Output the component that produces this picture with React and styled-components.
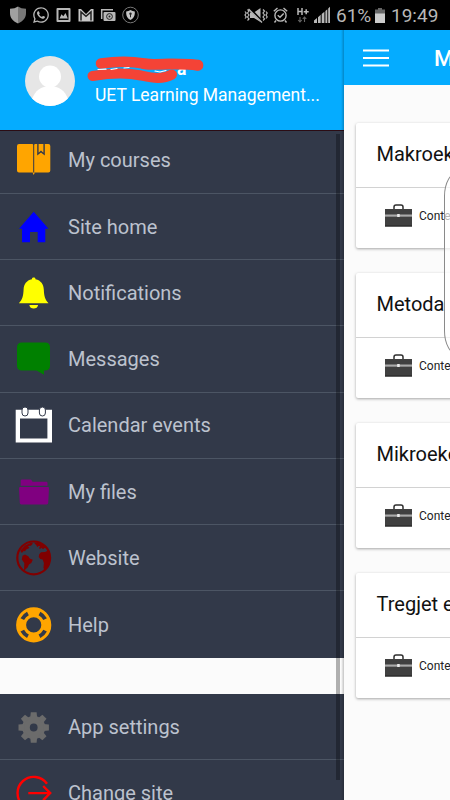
import React from 'react'
import styled, { createGlobalStyle } from 'styled-components'
import { FaWhatsapp } from 'react-icons/fa'

const GlobalStyle = createGlobalStyle`
	* {
		box-sizing: border-box;
	}
	body {
		margin: 0;
		overflow: hidden;
		background: #fbfbfb;
		font-family: Roboto, "Liberation Sans", sans-serif;
	}
	svg {
		display: block;
		flex: none;
		overflow: visible;
	}
`

const Screen = styled.div`
	width: 450px;
	height: 800px;
	display: flex;
	flex-direction: column;
	overflow: hidden;
`

const StatusBar = styled.div`
	height: 30px;
	flex: none;
	display: flex;
	justify-content: space-between;
	background: #000;
	color: #b8b8b8;
`

const StatusGroup = styled.div`
	display: flex;
	align-items: center;
	gap: ${props => props.$gap}px;
	padding: 0 ${props => props.$right || 0}px 0 ${props => props.$left || 0}px;
`

const StatusText = styled.span`
	width: ${props => props.$width}px;
	padding-top: 2px;
	font-size: 19px;
	line-height: 28px;
	white-space: nowrap;
`

const Body = styled.div`
	flex: 1;
	min-height: 0;
	display: flex;
`

const Drawer = styled.div`
	position: relative;
	width: 344px;
	flex: none;
	display: flex;
	flex-direction: column;
	overflow: hidden;
`

const Profile = styled.div`
	position: relative;
	z-index: 1;
	height: 101px;
	flex: none;
	display: flex;
	align-items: center;
	gap: 20px;
	padding: 2px 0 0 25px;
	background: #05acff;
	border-bottom: 1px solid #2b0c14;
`

const ProfileText = styled.div`
	position: relative;
	color: #fff;
	font-size: 17.5px;
	line-height: 26px;
	white-space: nowrap;
	padding-top: 1px;
`

const UserName = styled.div`
	height: 26px;
	padding-left: 82px;
	font-weight: bold;
`

const Scribble = styled.svg`
	position: absolute;
	left: -9px;
	top: 0;
`

const MenuGroup = styled.div`
	flex: none;
	margin-top: ${props => props.$offset}px;
	background: #323949;
`

const MenuRow = styled.div`
	height: 66.25px;
	display: flex;
	align-items: center;
	gap: 16px;
	padding-left: 16px;
	border-bottom: ${props => props.$last ? 'none' : '1px solid #4c5564'};
	color: #bcc2ce;
	font-size: 20px;
`

const Scrollbar = styled.div`
	position: absolute;
	z-index: 2;
	top: 104px;
	left: 336px;
	width: 4px;
	height: 646px;
	background: rgba(0, 0, 0, 0.3);
`

const EdgeShadow = styled.div`
	position: absolute;
	z-index: 2;
	top: 0;
	right: 0;
	width: 3px;
	height: 770px;
	background: linear-gradient(to right, rgba(0, 0, 0, 0), rgba(0, 0, 0, 0.22));
`

const Content = styled.div`
	position: relative;
	flex: 1;
	min-width: 0;
	overflow: hidden;
	background: #fbfbfb;
`

const Toolbar = styled.div`
	height: 55px;
	display: flex;
	align-items: center;
	gap: 45px;
	padding-left: 19px;
	background: #05acff;
	color: #fff;
	font-size: 22.5px;
	font-weight: 500;
	white-space: nowrap;
`

const Cards = styled.div`
	display: flex;
	flex-direction: column;
	gap: 25px;
	padding: 37.5px 0 0 12px;
`

const Card = styled.div`
	width: 320px;
	height: 125px;
	background: #fff;
	border-radius: 2px;
	box-shadow: 0 1px 3px rgba(0, 0, 0, 0.35);
`

const CardTitle = styled.div`
	height: 65px;
	padding-left: 20.5px;
	border-bottom: 1px solid #d2d2d2;
	color: #111;
	font-size: 20px;
	line-height: 62px;
`

const CardLink = styled.div`
	height: 56px;
	display: flex;
	align-items: center;
	gap: 7px;
	padding-left: 29px;
	color: #222;
	font-size: 12px;
`

const EdgePanel = styled.div`
	position: absolute;
	top: 142px;
	left: 100px;
	width: 40px;
	height: 183px;
	border: 1px solid #8a8a8a;
	border-radius: 14px / 24px;
	background: rgba(255, 255, 255, 0.68);
`

const BookIcon = () => (
	<svg width="36" height="36" viewBox="0 0 36 36">
		<path fill="orange" d="M3 2h13.2q1 0 1 1v27.4H3q-2 0-2-2V4q0-2 2-2zM18.2 3q0-1 1-1h2v11.6l3.8-3.2 3.8 3.2V2h3.5q2 0 2 2v24.4q0 2-2 2H18.2z" />
		<path fill="orange" d="M22.6 2h4.8v8.8L25 8.6l-2.4 2.2zM16.5 30.4h2.4l-1.2 2.6z" />
	</svg>
)

const HomeIcon = () => (
	<svg width="36" height="36" viewBox="0 0 36 36">
		<path fill="#00f" d="M17.7 2.7 32.5 19.8h-3.2v13.4h-7.6V23H14v10.2H6V19.8H3z" />
	</svg>
)

const BellIcon = () => (
	<svg width="36" height="36" viewBox="0 0 36 36">
		<path fill="#ff0" d="M17.7 2.6c1.2 0 1.8.7 1.8 1.7 5.5 1.2 8 5 8.3 10.2.3 6.6 1.2 10 4.7 13.7H2.9c3.5-3.7 4.4-7.1 4.7-13.7.3-5.2 2.8-9 8.300-10.200 0-1 .6-1.700 1.800-1.700zM13.300 30h8.800c-.4 2.400-2 3.600-4.400 3.600s-4-1.200-4.400-3.600z" />
	</svg>
)

const MessageIcon = () => (
	<svg width="36" height="36" viewBox="0 0 36 36">
		<path fill="green" d="M6 1.500h23q5 0 5 5v18q0 5-5 5h-1v4.300l-7.400-4.300H6q-5 0-5-5v-18q0-5 5-5z" />
	</svg>
)

const CalendarIcon = () => (
	<svg width="36" height="36" viewBox="0 0 36 36">
		<path fill="#fff" fillRule="evenodd" d="M-.3 2.700H36v32.700H-.3zM4 11.400v20h27.400v-20z" />
		<rect x="6" y="0" width="6" height="9" rx="3" fill="#fff" stroke="#323949" strokeWidth="1" />
		<rect x="23.400" y="0" width="6" height="9" rx="3" fill="#fff" stroke="#323949" strokeWidth="1" />
	</svg>
)

const FolderIcon = () => (
	<svg width="36" height="36" viewBox="0 0 36 36">
		<path fill="purple" d="M4.700 11.700V6.800q0-1.400 1.400-1.400h8.200q1 0 1.500 1l.6 1.300h13.900q1.200 0 1.200 1.200v2.800zM3 14.300q0-1.200 1.200-1.200h27.700q1.200 0 1.100 1.200l-.8 14.700q-.1 1.400-1.500 1.400H5.300q-1.400 0-1.500-1.400z" />
	</svg>
)

const EarthIcon = () => (
	<svg width="36" height="36" viewBox="0 0 36 36">
		<circle cx="17.700" cy="17.900" r="16.400" fill="none" stroke="maroon" strokeWidth="2.200" />
		<path fill="maroon" d="M6.500 15.800 9 14.500l3.300 1.700 1.500 2.300 3 1.200-1.500 3.200-2.300 1.500-1.600 3.300-2 1.500-.4 2-1-.7.3-7.500-2.500-3.500z" />
		<path fill="maroon" d="M23.200 14.200 25 12.300l4-.2 3-1.600 2 7-1.300 7-4 5.200-1.300-1.700.5-5-1.300-3.500-2.300-.5-1.600-2z" />
		<path fill="maroon" d="M4.500 10.500 9 5.500l6-2.700 2 .7-2 2.300-3 .2 1.500 2-3 1.300-1.500 2-1.300-.3-1.600 1.800-1.200-.5zM18 2.800l4-.3 5 2.300 3.300 3.500-1.800-.3-1.500 1.300-1.700-1.500-1.300 1.500-1-1.300 1.300-1.800-2-.3-1 1.300-.8-1.800z" />
	</svg>
)

const HelpIcon = () => (
	<svg width="36" height="36" viewBox="0 0 36 36">
		<circle cx="17.700" cy="17.900" r="12.600" fill="none" stroke="orange" strokeWidth="10" />
		<circle
			cx="17.700" cy="17.900" r="12.800" pathLength="360" fill="none" stroke="#323949"
			strokeWidth="4" strokeDasharray="36 54" strokeDashoffset="-27"
		/>
	</svg>
)

const GearIcon = () => (
	<svg width="36" height="36" viewBox="0 0 36 36">
		<circle cx="17.700" cy="18.500" r="7.700" fill="none" stroke="#6b6b6b" strokeWidth="7.600" />
		{[0, 45, 90, 135, 180, 225, 270, 315].map(angle => (
			<path key={angle} fill="#6b6b6b" d="M14.200 9l.6-5.700h5.800l.6 5.700z" transform={`rotate(${angle} 17.700 18.500)`} />
		))}
	</svg>
)

const ExitIcon = () => (
	<svg width="36" height="36" viewBox="0 0 36 36" fill="none" stroke="#f00" strokeWidth="2.400">
		<path d="M31 8.800a16.200 16.200 0 1 0 0 18.600M12.300 18.100H34M27.200 11l7 7.100-7 7.100" />
	</svg>
)

const BriefcaseIcon = () => (
	<svg width="27" height="23" viewBox="0 0 27 23">
		<path d="M9 5V3q0-2 2-2h5q2 0 2 2v2" fill="none" stroke="#2f2f2f" strokeWidth="1.500" />
		<path fill="#404040" d="M0 5h27v6H0zM0 12.300h27V22.500H0z" />
		<path fill="#aaa" d="M0 10.500h27v1.900H0z" />
		<path fill="#eee" d="M12.200 10h2.500v3h-2.500z" />
		<path fill="#222" d="M0 21.500h27v1H0z" />
	</svg>
)

const StatusLeft = () => (
	<StatusGroup $gap={6} $left={10}>
		<svg width="16" height="18" viewBox="0 0 16 18">
			<path fill="#a0a0a0" d="M8 .5v17C2.500 15 0 11.500 0 7V2.700Q5 2.700 8 .5z" />
			<path fill="#787878" d="M8 .5v17c5.500-2.500 8-6 8-10.500V2.700Q11 2.700 8 .5z" />
		</svg>
		<FaWhatsapp size={18} />
		<svg width="16" height="18" viewBox="0 0 16 18">
			<path fill="#b8b8b8" fillRule="evenodd" d="M1.500 2h12q1 0 1 1v12q0 1-1 1h-12q-1 0-1-1V3q0-1 1-1zM2.500 4v10h10V4z" />
			<path fill="#b8b8b8" d="M3.500 12.500 5.500 8.300l1.800 2L9.500 7l2.300 5.500z" />
		</svg>
		<svg width="16" height="18" viewBox="0 0 16 18">
			<path fill="#c8c8c8" d="M.5 3H3l5 5 5-5h2.500v12.500H.5z" />
			<path fill="none" stroke="#222" strokeWidth="1.500" d="M3 14.500V6l5 4.300L13 6v8.500" />
		</svg>
		<svg width="16" height="18" viewBox="0 0 16 18">
			<path fill="none" stroke="#b8b8b8" strokeWidth="1.500" d="M1.700 13V3.700H13" />
			<rect x="3.500" y="6" width="12" height="9" rx="1" fill="#b8b8b8" />
			<circle cx="9.500" cy="10.500" r="2.900" fill="none" stroke="#222" />
			<circle cx="9.500" cy="10.500" r="1" fill="#222" />
		</svg>
		<svg width="17" height="18" viewBox="0 0 17 18">
			<circle cx="8.500" cy="9" r="7.800" fill="none" stroke="#777" />
			<path fill="#c4c4c4" d="M8.500 4q2 1.300 4.300 1.400c.2 4-.8 6.700-4.300 8.600-3.500-1.900-4.500-4.600-4.300-8.600Q6.500 5.300 8.500 4z" />
			<circle cx="8.500" cy="7.700" r="1.200" fill="#222" />
			<path stroke="#222" d="M8.500 8v3.300" />
		</svg>
	</StatusGroup>
)

const StatusRight = () => (
	<StatusGroup $gap={5} $right={12}>
		<svg width="24" height="18" viewBox="0 0 24 18">
			<path fill="#b8b8b8" d="M6 6.500h4L16.500 2v14L10 12H6z" />
			<path fill="none" stroke="#b8b8b8" strokeWidth="1.200" d="M3.500 3.500 5 5 3.500 7 5 9l-1.500 2L5 13l-1.500 1.500M1 5.500 2.200 7 1 9l1.200 2L1 12.500M19 3.500 20.500 5 19 7l1.500 2L19 11l1.500 2-1.500 1.500M22 5.500 23.200 7 22 9l1.200 2-1.200 1.500" />
			<path stroke="#000" strokeWidth="2.500" d="M5.500 2.500 18.500 16" />
			<path stroke="#b8b8b8" strokeWidth="1.500" d="M4.500 3 18 16.500" />
		</svg>
		<svg width="15" height="18" viewBox="0 0 15 18" fill="none" stroke="#b8b8b8" strokeWidth="1.400">
			<circle cx="7.500" cy="9.500" r="5.600" />
			<path d="M.8 5.200 4.500 2M14.200 5.200 10.500 2M3 14.500 1.500 16.500M12 14.500l1.500 2M4.700 9.300 7 11.300 10.700 7.500" />
		</svg>
		<svg width="16" height="18" viewBox="0 0 16 18">
			<path fill="none" stroke="#b8b8b8" strokeWidth="1.500" d="M5 2v7M9 2v7M5 5.500h4M10.700 5.700h5M13.200 3.300V8.300" />
			<path fill="none" stroke="#666" strokeWidth="1.100" d="M7 11v5M5.200 14 7 16l1.800-2M11.500 16v-5M9.700 13l1.800-2 1.800 2" />
		</svg>
		<svg width="17" height="18" viewBox="0 0 17 18">
			<path fill="#b8b8b8" d="M0 14.500 3 12v5H0zM4 11.200l2.700-2.400V17H4zM7.700 8l2.700-2.300V17H7.700z" />
			<path fill="#b8b8b8" d="M11.400 5l1.900-1.700V17h-1.900zM14.200 2.500l1.800-1.700V17h-1.800z" />
		</svg>
		<StatusText $width={33}>61%</StatusText>
		<svg width="12" height="18" viewBox="0 0 12 18">
			<path fill="#666" d="M4 2h4v1.500h3V8H1V3.500h3z" />
			<path fill="#ccc" d="M1 7.500h10V17H1z" />
		</svg>
		<StatusText $width={47}>19:49</StatusText>
	</StatusGroup>
)

const mainItems = [
	{ label: 'My courses', Icon: BookIcon },
	{ label: 'Site home', Icon: HomeIcon },
	{ label: 'Notifications', Icon: BellIcon },
	{ label: 'Messages', Icon: MessageIcon },
	{ label: 'Calendar events', Icon: CalendarIcon },
	{ label: 'My files', Icon: FolderIcon },
	{ label: 'Website', Icon: EarthIcon },
	{ label: 'Help', Icon: HelpIcon },
]

const appItems = [
	{ label: 'App settings', Icon: GearIcon },
	{ label: 'Change site', Icon: ExitIcon },
]

const courses = ['Makroek', 'Metoda', 'Mikroeko', 'Tregjet e']

function Menu({ items, offset }) {
	return (
		<MenuGroup $offset={offset}>
			{ items.map(({ label, Icon }, i) => (
				<MenuRow key={ label } $last={ i === items.length - 1 }>
					<Icon />
					{ label }
				</MenuRow>
			)) }
		</MenuGroup>
	)
}

function App() {
	return (
		<Screen>
			<GlobalStyle />
			<StatusBar>
				<StatusLeft />
				<StatusRight />
			</StatusBar>
			<Body>
				<Drawer>
					<Profile>
						<svg width="50" height="50" viewBox="0 0 50 50">
							<clipPath id="avatar"><circle cx="25" cy="25" r="25" /></clipPath>
							<g clipPath="url(#avatar)">
								<path fill="#e6e6e6" d="M0 0h50v50H0z" />
								<circle cx="25" cy="20.500" r="11" fill="#fff" />
								<path fill="#fff" d="M7 43c3-8 9-13 18-13s15 5 18 13v8H7z" />
							</g>
						</svg>
						<ProfileText>
							<UserName>a</UserName>
							UET Learning Management...
							<Scribble width="120" height="30" viewBox="0 0 120 30" fill="none" stroke="#f44336" strokeLinecap="round" strokeLinejoin="round">
								<path strokeWidth="10.500" d="M15 8.500C32 6 44 6 58 8.500S95 7 112 10" />
								<path strokeWidth="10.500" d="M58 9C75 10 95 7.500 112 10.500" />
								<path strokeWidth="10" d="M6.500 21C25 18 43 18 55 20.500S76 25 86 19.500" />
								<path strokeWidth="1.200" stroke="#fff" d="M12 14.500l8-.3M25 14.500l6-1M38 13l5-.5M69 16l5 1 6-1.500" />
							</Scribble>
						</ProfileText>
					</Profile>
					<Menu items={mainItems} offset={-3.3} />
					<Menu items={appItems} offset={36.300} />
					<Scrollbar />
					<EdgeShadow />
				</Drawer>
				<Content>
					<Toolbar>
						<svg width="26" height="18" viewBox="0 0 26 18">
							<path stroke="#fff" strokeWidth="2.200" d="M0 1.500h26M0 9h26M0 16.500h26" />
						</svg>
						M
					</Toolbar>
					<Cards>
						{ courses.map(course => (
							<Card key={ course }>
								<CardTitle>{ course }</CardTitle>
								<CardLink>
									<BriefcaseIcon />
									Conte
								</CardLink>
							</Card>
						)) }
					</Cards>
					<EdgePanel />
				</Content>
			</Body>
		</Screen>
	)
}

export default App
